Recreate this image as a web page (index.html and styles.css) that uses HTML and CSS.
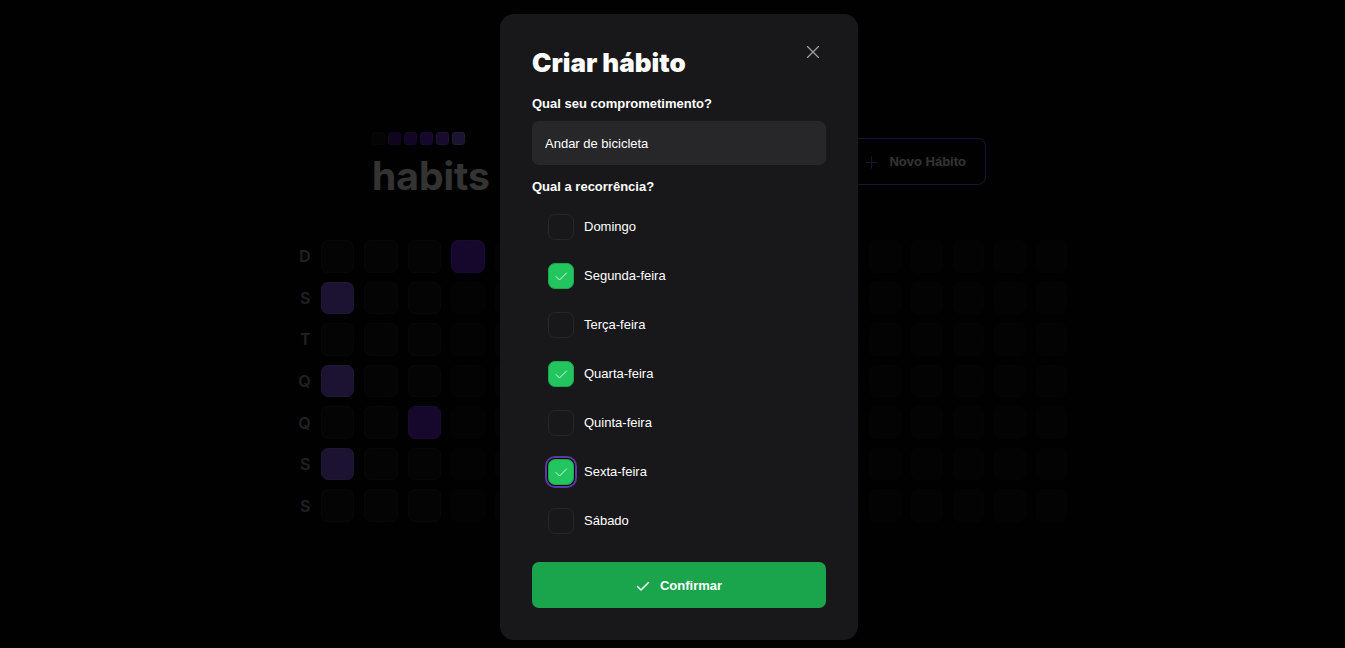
FILE: index.html
```html
<!DOCTYPE html>
<html lang="pt-BR">
<head>
<meta charset="utf-8">
<title>Habits</title>
<link rel="stylesheet" href="styles.css">
</head>
<body>
<main class="page">
  <header class="header">
    <div class="logo">
      <div class="logo-dots"><i></i><i></i><i></i><i></i><i></i><i></i></div>
      <span class="logo-name">habits</span>
    </div>
    <button class="new-habit" type="button">
      <svg width="14" height="14" viewBox="0 0 14 14" fill="none" stroke="currentColor"><path d="M7.5 1.5v12M1.5 7.5h12"/></svg>
      Novo Hábito
    </button>
  </header>
  <section class="summary" id="summary"></section>
</main>

<div class="overlay">
  <form class="modal" role="dialog" aria-labelledby="title">
    <div class="modal-head">
      <h1 class="title" id="title">Criar hábito</h1>
      <button class="close" type="button" aria-label="Fechar">
        <svg width="14" height="12" viewBox="0 0 14 12" fill="none" stroke="currentColor" stroke-width="1.2" stroke-linecap="round"><path d="M1.5 0.5l11 11M12.5 0.5l-11 11"/></svg>
      </button>
    </div>
    <label class="field-label" for="habit">Qual seu comprometimento?</label>
    <input class="field" id="habit" type="text" value="Andar de bicicleta">
    <p class="field-label repeat-label" id="repeat">Qual a recorrência?</p>
    <div class="days" role="group" aria-labelledby="repeat">
      <label class="day"><span class="box"><input type="checkbox"></span>Domingo</label>
      <label class="day"><span class="box"><input type="checkbox" checked><svg viewBox="0 0 14 14"><path d="M2 7.5l3.5 3.5L12.5 4"/></svg></span>Segunda-feira</label>
      <label class="day"><span class="box"><input type="checkbox"></span>Terça-feira</label>
      <label class="day"><span class="box"><input type="checkbox" checked><svg viewBox="0 0 14 14"><path d="M2 7.5l3.5 3.5L12.5 4"/></svg></span>Quarta-feira</label>
      <label class="day"><span class="box"><input type="checkbox"></span>Quinta-feira</label>
      <label class="day"><span class="box"><input class="ringed" type="checkbox" checked><svg viewBox="0 0 14 14"><path d="M2 7.5l3.5 3.5L12.5 4"/></svg></span>Sexta-feira</label>
      <label class="day"><span class="box"><input type="checkbox"></span>Sábado</label>
    </div>
    <button class="confirm" type="submit">
      <svg width="14" height="14" viewBox="0 0 14 14" fill="none" stroke="currentColor" stroke-width="1.5" stroke-linecap="round" stroke-linejoin="round"><path d="M1.5 7.5L5 11l7.5-7.5"/></svg>
      Confirmar
    </button>
  </form>
</div>
<script src="grid.js"></script>
</body>
</html>
```

FILE: styles.css
```css
* { box-sizing: border-box; }

body {
  margin: 0;
  background: #09090b;
  color: #fff;
  font-family: "Liberation Sans", Arial, sans-serif;
  font-size: 13px;
  line-height: 20px;
}

button, input { font: inherit; color: inherit; }

.page {
  min-height: 100vh;
  padding: 6px 0 0 13px;
  display: flex;
  flex-direction: column;
  align-items: center;
  justify-content: center;
  gap: 41px;
}

.header {
  width: 614px;
  max-width: 100%;
  display: flex;
  justify-content: space-between;
  align-items: flex-start;
}

.logo { display: flex; flex-direction: column; gap: 7px; }
.logo-dots { display: flex; gap: 3px; }
.logo-dots i {
  width: 13px;
  height: 13px;
  border-radius: 3px;
  border: 1px solid #27272a;
  background: #18181b;
}
.logo-dots i:nth-child(2) { background: #4c1d95; border-color: #5b21b6; }
.logo-dots i:nth-child(3) { background: #5b21b6; border-color: #6d28d9; }
.logo-dots i:nth-child(4) { background: #6d28d9; border-color: #7c3aed; }
.logo-dots i:nth-child(5) { background: #7c3aed; border-color: #8b5cf6; }
.logo-dots i:nth-child(6) { background: #8b5cf6; border-color: #a78bfa; }
.logo-name { font-family: Inter, sans-serif; font-size: 39px; line-height: 47px; font-weight: 700; }

.new-habit {
  margin-top: 6px;
  padding: 13px 19px 12px;
  display: flex;
  align-items: center;
  gap: 11px;
  background: none;
  border: 1px solid #8b5cf6;
  border-radius: 8px;
  font-weight: 700;
}
.new-habit svg { color: #8b5cf6; }

.summary {
  width: 777px;
  max-width: 100%;
  height: 282px;
  padding-left: 6px;
  display: grid;
  grid-template-columns: 14px repeat(4, 34fr) repeat(14, 32fr);
  grid-template-rows: repeat(7, 1fr);
  grid-auto-flow: column;
  gap: 9px 10px;
}
.weekday {
  display: flex;
  align-items: center;
  justify-content: flex-end;
  color: #a1a1aa;
  font-family: Inter, sans-serif;
  font-size: 16px;
  line-height: 16px;
  font-weight: 600;
}
.cell { background: #18181b; border: 1px solid #27272a; border-radius: 7px; }
.cell.future { opacity: .4; }
.cell.mid { background: #6d28d9; border-color: #7c3aed; }
.cell.high { background: #8b5cf6; border-color: #9d78f8; }

.overlay {
  position: fixed;
  inset: 0;
  padding: 6px 0 0 13px;
  display: flex;
  align-items: center;
  justify-content: center;
  background: rgba(0, 0, 0, .8);
}

.modal {
  width: 358px;
  padding: 32px;
  display: flex;
  flex-direction: column;
  background: #18181b;
  border-radius: 14px;
}
.modal-head { display: flex; justify-content: space-between; align-items: flex-start; }
.title { margin: 0; font-family: "Arial Black", Inter, sans-serif; font-size: 26px; line-height: 33px; font-weight: 900; }
.close {
  margin-right: 6px;
  padding: 0;
  display: flex;
  background: none;
  border: 0;
  color: #a1a1aa;
}
.field-label { margin: 15px 0 0; font-weight: 700; }
.field {
  width: 100%;
  height: 44px;
  margin-top: 7px;
  padding: 0 13px;
  background: #27272a;
  border: 0;
  border-radius: 7px;
}
.repeat-label { margin-top: 12px; }

.days { margin-top: 5px; padding-left: 16px; }
.day { height: 49px; display: flex; align-items: center; gap: 10px; }
.box { display: grid; place-items: center; }
.box > * { grid-area: 1 / 1; }
.box input {
  appearance: none;
  width: 26px;
  height: 26px;
  margin: 0;
  border: 1px solid #27272a;
  border-radius: 7px;
}
.box input:checked { background: #22c55e; border-color: #1aa84c; }
.box .ringed { box-shadow: 0 0 0 1px #09090b, 0 0 0 3px #5b38a8; }
.box svg {
  width: 14px;
  height: 14px;
  fill: none;
  stroke: #d5f7e1;
  stroke-linecap: round;
  stroke-linejoin: round;
  pointer-events: none;
}

.confirm {
  height: 46px;
  margin-top: 17px;
  padding: 1px 0 0;
  display: flex;
  align-items: center;
  justify-content: center;
  gap: 10px;
  background: #1aa54c;
  border: 0;
  border-radius: 7px;
  font-weight: 700;
}
```

FILE: grid.js
```js
const summary = document.getElementById("summary");
const levels = { "0,1": "high", "0,3": "high", "0,5": "high", "2,4": "mid", "3,0": "mid" };

for (const day of "DSTQQSS") {
  const label = document.createElement("div");
  label.className = "weekday";
  label.textContent = day;
  summary.append(label);
}

for (let week = 0; week < 18; week++) {
  for (let day = 0; day < 7; day++) {
    const cell = document.createElement("div");
    const level = levels[week + "," + day];
    cell.className = "cell " + (level || (week > 2 ? "future" : ""));
    summary.append(cell);
  }
}
```
